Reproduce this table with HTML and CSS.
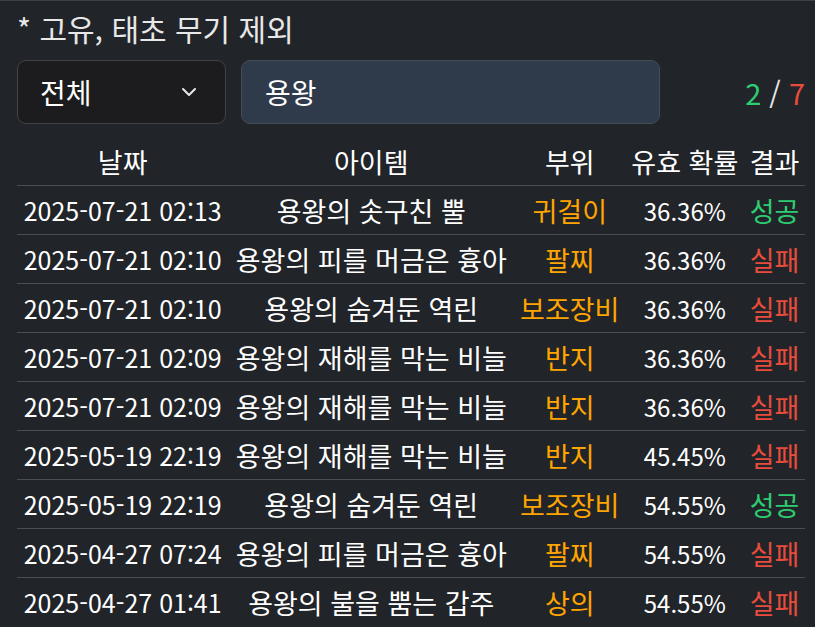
FILE: index.html
```html
<!DOCTYPE html>
<html lang="ko">
<head>
    <meta charset="UTF-8">
    <meta name="viewport" content="width=device-width, initial-scale=1.0">
    <title>강화 기록</title>
    <link rel="stylesheet" href="styles.css">
</head>
<body>
    <div class="page">
        <p class="notice">* 고유, 태초 무기 제외</p>

        <div class="controls">
            <div class="select">
                <span>전체</span>
                <svg class="chevron" width="16" height="10" viewBox="0 0 16 10">
                    <path d="M2 2 L8 8 L14 2" fill="none" stroke="#e8e8e8" stroke-width="2" stroke-linecap="round" stroke-linejoin="round"/>
                </svg>
            </div>
            <div class="search">용왕</div>
            <div class="count"><span class="ok">2</span> / <span class="fail">7</span></div>
        </div>

        <table class="log">
            <thead>
                <tr>
                    <th>날짜</th>
                    <th>아이템</th>
                    <th>부위</th>
                    <th>유효 확률</th>
                    <th>결과</th>
                </tr>
            </thead>
            <tbody>
                <tr><td class="date">2025-07-21 02:13</td><td class="name">용왕의 솟구친 뿔</td><td class="part">귀걸이</td><td class="rate">36.36%</td><td class="ok">성공</td></tr>
                <tr><td class="date">2025-07-21 02:10</td><td class="name">용왕의 피를 머금은 흉아</td><td class="part">팔찌</td><td class="rate">36.36%</td><td class="fail">실패</td></tr>
                <tr><td class="date">2025-07-21 02:10</td><td class="name">용왕의 숨겨둔 역린</td><td class="part">보조장비</td><td class="rate">36.36%</td><td class="fail">실패</td></tr>
                <tr><td class="date">2025-07-21 02:09</td><td class="name">용왕의 재해를 막는 비늘</td><td class="part">반지</td><td class="rate">36.36%</td><td class="fail">실패</td></tr>
                <tr><td class="date">2025-07-21 02:09</td><td class="name">용왕의 재해를 막는 비늘</td><td class="part">반지</td><td class="rate">36.36%</td><td class="fail">실패</td></tr>
                <tr><td class="date">2025-05-19 22:19</td><td class="name">용왕의 재해를 막는 비늘</td><td class="part">반지</td><td class="rate">45.45%</td><td class="fail">실패</td></tr>
                <tr><td class="date">2025-05-19 22:19</td><td class="name">용왕의 숨겨둔 역린</td><td class="part">보조장비</td><td class="rate">54.55%</td><td class="ok">성공</td></tr>
                <tr><td class="date">2025-04-27 07:24</td><td class="name">용왕의 피를 머금은 흉아</td><td class="part">팔찌</td><td class="rate">54.55%</td><td class="fail">실패</td></tr>
                <tr><td class="date">2025-04-27 01:41</td><td class="name">용왕의 불을 뿜는 갑주</td><td class="part">상의</td><td class="rate">54.55%</td><td class="fail">실패</td></tr>
            </tbody>
        </table>
    </div>
</body>
</html>
```

FILE: styles.css
```css
html, body {
    margin: 0;
    height: 100%;
    overflow: hidden;
}

body {
    background-color: #212428;
    border-top: 1px solid #3d4045;
    box-sizing: border-box;
    color: #ffffff;
    font-family: "Noto Sans CJK KR", "Noto Sans", sans-serif;
    font-size: 27px;
}

.page {
    padding: 9px 10px 0 17px;
}

.notice {
    margin: 0;
    line-height: 36px;
    font-size: 30px;
    color: #e8e8e8;
}

.controls {
    display: flex;
    align-items: center;
    margin-top: 14px;
    height: 64px;
    font-size: 28px;
}

.select {
    box-sizing: border-box;
    width: 209px;
    height: 64px;
    display: flex;
    align-items: center;
    justify-content: space-between;
    padding: 0 28px 0 22px;
    background-color: #1c1c1e;
    border: 1px solid #404348;
    border-radius: 9px;
}

.search {
    box-sizing: border-box;
    width: 419px;
    height: 64px;
    margin-left: 15px;
    display: flex;
    align-items: center;
    padding-left: 23px;
    background-color: #2f3a4b;
    border: 1px solid #464c56;
    border-radius: 9px;
}

.count {
    margin-left: auto;
    font-size: 29px;
    color: #e8e8e8;
}

.ok {
    color: #2ecc71;
}

.fail {
    color: #e74c3c;
}

.part {
    color: #ffa500;
}

.log {
    width: 100%;
    margin-top: 13px;
    border-collapse: collapse;
}

.log th,
.log td {
    height: 48px;
    padding: 0 5px;
    text-align: center;
    white-space: nowrap;
    font-weight: normal;
    border-bottom: 1px solid #4a4d52;
}

.log .date {
    font-size: 25px;
}

.log .rate {
    font-size: 24px;
}

.log tbody tr:last-child td {
    border-bottom: none;
}
```
